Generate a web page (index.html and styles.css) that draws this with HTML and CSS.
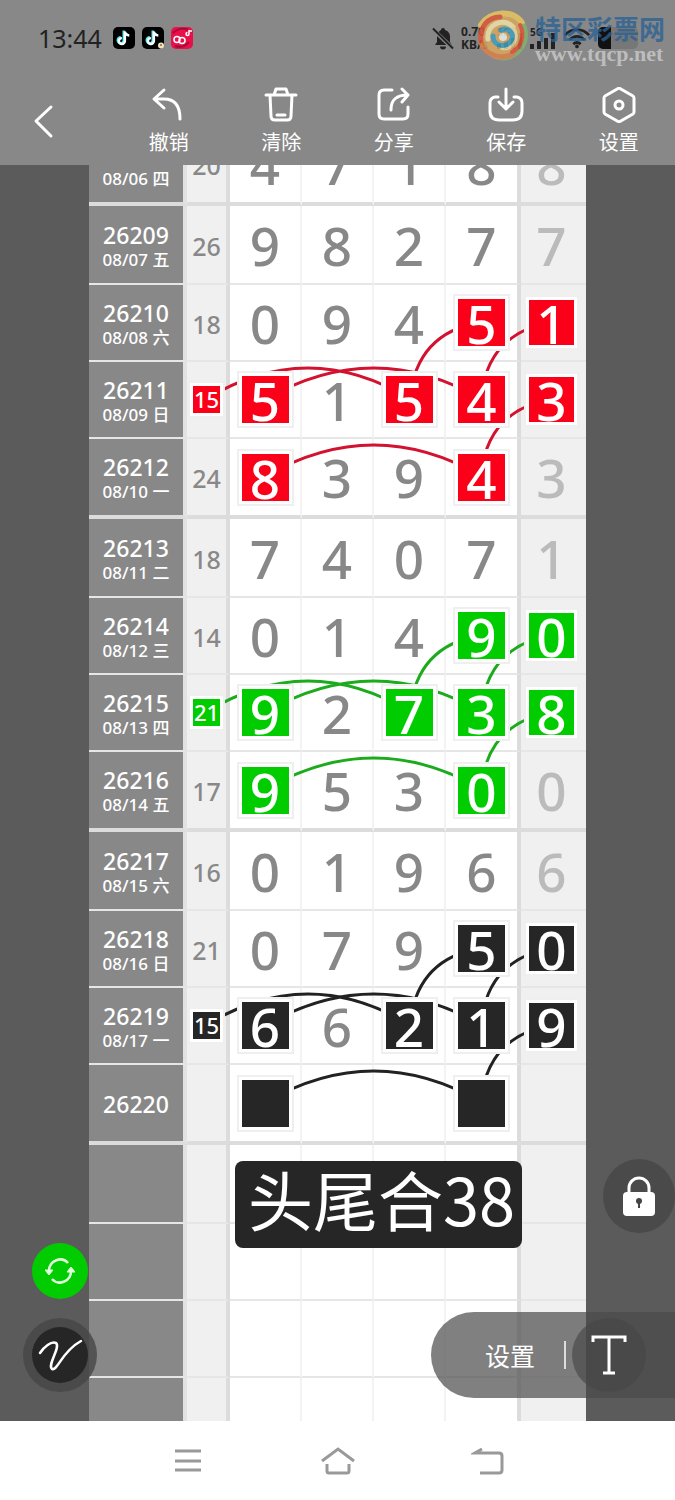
FILE: index.html
```html
<!DOCTYPE html>
<html lang="zh-CN">
<head>
    <meta charset="UTF-8">
    <meta name="viewport" content="width=device-width, initial-scale=1.0">
    <title>走势图</title>
    <link rel="stylesheet" href="styles.css">
</head>
<body>
    <header class="header">
        <!-- Status bar -->
        <div class="status">
            <span class="time">13:44</span>
            <svg class="app" viewBox="0 0 22 22"><rect width="22" height="22" rx="5" fill="#000"/><g fill="none" stroke-width="2.4"><path d="M11.3 4v9.600a3 3 0 1 1-3-3M11.300 4.500c.6 2.300 2 3.400 4.400 3.500" stroke="#5ee" transform="translate(-.6 -.4)"/><path d="M11.900 4.500v9.600a3 3 0 1 1-3-3M11.900 5c.6 2.300 2 3.400 4.400 3.500" stroke="#fff"/></g></svg>
            <svg class="app" viewBox="0 0 22 22"><rect width="22" height="22" rx="5" fill="#000"/><g fill="none" stroke-width="2.4"><path d="M11.3 4v9.600a3 3 0 1 1-3-3M11.300 4.500c.6 2.300 2 3.400 4.400 3.500" stroke="#5ee" transform="translate(-.6 -.4)"/><path d="M11.900 4.500v9.600a3 3 0 1 1-3-3M11.900 5c.6 2.300 2 3.400 4.400 3.500" stroke="#fff"/></g><circle cx="19" cy="18.500" r="3" fill="#f3e6b8"/><circle cx="19" cy="18" r="1" fill="#865"/></svg>
            <svg class="app" viewBox="0 0 22 22"><rect width="22" height="22" rx="5" fill="#e80f4a"/><path d="M2 6c5-5 11-5 15-3M4 19c6 2 10 1 14-4" stroke="#a00a38" stroke-width="2" fill="none"/><g fill="none" stroke="#fff" stroke-width="1.500"><circle cx="6" cy="12.500" r="3"/><circle cx="11" cy="13.500" r="3"/><path d="M18 3v4a1.500 1.500 0 1 1-1.500-1.500M18 4h3"/></g></svg>
            <span class="spacer"></span>
            <svg class="bell" viewBox="0 0 22 24"><path d="M11 2a2 2 0 0 1 2 2c3 1 5 3 5 7v5l2 3H3l2-3v-5c0-4 2-6 4-7a2 2 0 0 1 2-2zM8 20.500h6a3 3 0 0 1-6 0z" fill="#222"/><path d="M1 3.500l20 19" stroke="#888" stroke-width="4"/><path d="M1 2.500l20 20" stroke="#222" stroke-width="2"/></svg>
            <span class="speed">0.70<br>KB/s</span>
            <span class="signal"><small>5G</small><svg viewBox="0 0 26 16"><path d="M2 16v-5M9 16V8M16 16V5M23 16V0" stroke="#222" stroke-width="4"/></svg></span>
            <span class="signal"><small>5G</small><svg viewBox="0 0 26 16"><path d="M2 16v-5M9 16V8M16 16V5M23 16V0" stroke="#222" stroke-width="4"/></svg></span>
            <svg class="wifi" viewBox="0 0 30 24"><g fill="none" stroke="#222" stroke-width="3"><path d="M2 9c7-8 19-8 26 0M7 14c5-5 11-5 16 0M11 18.500c3-2.500 5-2.500 8 0"/></g><circle cx="15" cy="21" r="2" fill="#222"/></svg>
            <svg class="battery" viewBox="0 0 40 22"><rect width="40" height="22" rx="5" fill="#777"/><path d="M5 0h8v22H5a5 5 0 0 1-5-5V5a5 5 0 0 1 5-5z" fill="#111"/></svg>
        </div>

        <div class="watermark">
            <svg viewBox="0 0 54 54">
                <circle cx="27" cy="27" r="24" fill="#d9a860"/>
                <g fill="none" stroke-linecap="round">
                    <path d="M5 16C14 2 38 0 46 14" stroke="#e9c65e" stroke-width="6"/>
                    <path d="M48 17c6 18-8 32-22 32" stroke="#7fb56a" stroke-width="5"/>
                    <path d="M5 34c4 12 20 17 32 11" stroke="#dd8048" stroke-width="5"/>
                    <path d="M5 32C3 18 12 8 24 8" stroke="#e0563a" stroke-width="5"/>
                    <path d="M44 16c5 10 2 22-8 27" stroke="#e2523c" stroke-width="4"/>
                    <path d="M12 30c-2-15 16-22 25-12" stroke="#efe3a8" stroke-width="5"/>
                    <path d="M37 19c7 10-1 22-11 20" stroke="#e9d9a0" stroke-width="4"/>
                    <path d="M17 27c0 11 15 13 19 3 2-7-5-12-11-9" stroke="#3f9fc0" stroke-width="5"/>
                    <circle cx="27" cy="28" r="4" fill="#e8efe9" stroke="none"/>
                </g>
            </svg>
            <div>
                <div class="site-name">特区彩票网</div>
                <div class="site-url">www.tqcp.net</div>
            </div>
        </div>

        <!-- Toolbar -->
        <nav class="toolbar">
            <button class="tool back" aria-label="返回"><svg viewBox="0 0 36 36"><path d="M25 4L10 18l15 15"/></svg></button>
            <button class="tool"><svg viewBox="0 0 36 36"><path d="M13 3L3 12l10 9M4 12h9c10 0 16 6 16 20"/></svg>撤销</button>
            <button class="tool"><svg viewBox="0 0 36 36"><path d="M3 8h30M11 8l2-6h10l2 6M7 8l1 21q0 4 4 4h12q4 0 4-4l1-21M14 28h8"/></svg>清除</button>
            <button class="tool"><svg viewBox="0 0 36 36"><path d="M16 3H8q-5 0-5 5v19q0 5 5 5h19q5 0 5-5v-7M15 23c0-10 5-15 17-15M26 2l6 6-6 7"/></svg>分享</button>
            <button class="tool"><svg viewBox="0 0 36 36"><path d="M18 2v19M11 15l7 7 7-7M10 10H7q-5 1-5 6v8q0 9 9 9h14q9 0 9-9v-8q0-5-5-6h-3"/></svg>保存</button>
            <button class="tool"><svg viewBox="0 0 36 36"><path d="M18 1l14 8q1 1 1 2v14q0 1-1 2l-14 8-14-8q-1-1-1-2V11q0-1 1-2z"/><circle cx="18" cy="18" r="4"/></svg>设置</button>
        </nav>
    </header>

    <main class="main">
        <div class="board">
            <table class="chart">
                <colgroup>
                    <col class="c-issue"><col class="c-sum"><col class="c-num"><col class="c-num"><col class="c-num"><col class="c-num4"><col class="c-last">
                </colgroup>
                <tbody>
                    <tr><th>26208<span>08/06 四</span></th><td>20</td><td>4</td><td>7</td><td>1</td><td>8</td><td>8</td></tr>
                </tbody>
                <tbody class="red">
                    <tr><th>26209<span>08/07 五</span></th><td>26</td><td>9</td><td>8</td><td>2</td><td>7</td><td>7</td></tr>
                    <tr><th>26210<span>08/08 六</span></th><td>18</td><td>0</td><td>9</td><td>4</td><td><b>5</b></td><td><b>1</b></td></tr>
                    <tr><th>26211<span>08/09 日</span></th><td><b>15</b></td><td><b>5</b></td><td>1</td><td><b>5</b></td><td><b>4</b></td><td><b>3</b></td></tr>
                    <tr><th>26212<span>08/10 一</span></th><td>24</td><td><b>8</b></td><td>3</td><td>9</td><td><b>4</b></td><td>3</td></tr>
                </tbody>
                <tbody class="green">
                    <tr><th>26213<span>08/11 二</span></th><td>18</td><td>7</td><td>4</td><td>0</td><td>7</td><td>1</td></tr>
                    <tr><th>26214<span>08/12 三</span></th><td>14</td><td>0</td><td>1</td><td>4</td><td><b>9</b></td><td><b>0</b></td></tr>
                    <tr><th>26215<span>08/13 四</span></th><td><b>21</b></td><td><b>9</b></td><td>2</td><td><b>7</b></td><td><b>3</b></td><td><b>8</b></td></tr>
                    <tr><th>26216<span>08/14 五</span></th><td>17</td><td><b>9</b></td><td>5</td><td>3</td><td><b>0</b></td><td>0</td></tr>
                </tbody>
                <tbody class="black">
                    <tr><th>26217<span>08/15 六</span></th><td>16</td><td>0</td><td>1</td><td>9</td><td>6</td><td>6</td></tr>
                    <tr><th>26218<span>08/16 日</span></th><td>21</td><td>0</td><td>7</td><td>9</td><td><b>5</b></td><td><b>0</b></td></tr>
                    <tr><th>26219<span>08/17 一</span></th><td><b>15</b></td><td><b>6</b></td><td>6</td><td><b>2</b></td><td><b>1</b></td><td><b>9</b></td></tr>
                    <tr><th>26220</th><td></td><td><b></b></td><td></td><td></td><td><b></b></td><td></td></tr>
                </tbody>
                <tbody>
                    <tr><th></th><td></td><td></td><td></td><td></td><td></td><td></td></tr>
                    <tr><th></th><td></td><td></td><td></td><td></td><td></td><td></td></tr>
                    <tr><th></th><td></td><td></td><td></td><td></td><td></td><td></td></tr>
                    <tr><th></th><td></td><td></td><td></td><td></td><td></td><td></td></tr>
                </tbody>
            </table>

            <!-- Lines that join the marked numbers, one set per group -->
            <svg class="lines" viewBox="0 0 497 1332" preserveAspectRatio="none">
                <defs>
                    <path id="links" d="M117 273Q219 211 321 273M177 273Q285 211 392 273M177 350Q285 288 392 350M321 273Q327 207 392 196M392 273Q398 207 463 196M392 350Q398 284 463 273"/>
                </defs>
                <use href="#links" stroke="#d2122e"/>
                <use href="#links" y="313" stroke="#1cab1c"/>
                <use href="#links" y="626" stroke="#222"/>
            </svg>
            <div class="note">头尾合38</div>
        </div>

        <button class="round lock" aria-label="锁定"><svg viewBox="0 0 34 40"><path d="M7 18v-6a10 10 0 0 1 20 0v6" fill="none" stroke="#fff" stroke-width="3"/><rect x="1" y="16" width="32" height="24" rx="4" fill="#fff"/><circle cx="17" cy="25" r="3" fill="#444"/><path d="M17 25v7" stroke="#444" stroke-width="2"/></svg></button>
        <button class="round refresh" aria-label="刷新"><svg viewBox="0 0 30 26"><g fill="none" stroke="#dfffdc" stroke-width="2.500"><path d="M4 13C4 2 17-2 23 5M26 13c0 11-13 15-19 8"/></g><path d="M0 12h8l-4 5zM22 14h8l-4-5z" fill="#dfffdc" stroke="#dfffdc"/></svg></button>
        <button class="round pen" aria-label="画笔"><svg viewBox="0 0 56 56"><path d="M8 26C12 20 19 14 24 16c5 4-9 22-4 26 6 2 9-17 29-28" fill="none" stroke="#fff" stroke-width="2.500" stroke-linecap="round"/></svg></button>
        <div class="text-bar">
            <button class="text-set">设置</button>
            <button class="round text-tool" aria-label="文字"><svg viewBox="0 0 36 40"><path d="M2 7V2h32v5M18 2v36M12 38h12" fill="none" stroke="#fff" stroke-width="3"/></svg></button>
        </div>
    </main>

    <footer class="nav-bar">
        <button aria-label="菜单"><svg viewBox="0 0 34 28"><path d="M4 4h26M4 14h26M4 23h26"/></svg></button>
        <button aria-label="主页"><svg viewBox="0 0 34 28"><path d="M1 14L17 2l16 12M6 17v7q0 2 2 2h18q2 0 2-2v-7"/></svg></button>
        <button aria-label="返回"><svg viewBox="0 0 34 28"><path d="M11 2L4 6h24q3 0 3 3v14q0 3-3 3H9"/></svg></button>
    </footer>
</body>
</html>
```
FILE: styles.css
```css
* {
    box-sizing: border-box;
}
body {
    margin: 0;
    height: 100vh;
    display: flex;
    flex-direction: column;
    font-family: "Noto Sans", "Noto Sans CJK SC", sans-serif;
    background: #fff;
}
button {
    border: none;
    padding: 0;
    background: none;
    color: #fff;
    font-family: inherit;
    cursor: pointer;
}
svg {
    display: block;
}

/* Header */
.header {
    position: relative;
    height: 165px;
    background: #888;
}
.status {
    display: flex;
    align-items: center;
    gap: 7px;
    height: 75px;
    padding: 0 37px 0 38px;
    color: #222;
}
.time {
    font-size: 25px;
    margin-right: 4px;
}
.app {
    width: 22px;
    height: 22px;
}
.spacer {
    flex: 1;
}
.bell {
    width: 22px;
    height: 24px;
}
.speed {
    font-size: 12px;
    line-height: 13px;
    font-weight: bold;
    margin-right: 2px;
}
.signal small {
    display: block;
    font-size: 10px;
    line-height: 10px;
    font-weight: bold;
}
.signal svg {
    width: 26px;
    height: 16px;
    margin-top: -4px;
}
.wifi {
    width: 28px;
    height: 24px;
}
.battery {
    width: 40px;
    height: 22px;
}
.watermark {
    position: absolute;
    top: 9px;
    right: 10px;
    display: flex;
    align-items: center;
    gap: 5px;
}
.watermark svg {
    width: 54px;
    height: 54px;
    opacity: 0.85;
}
.site-name {
    padding-top: 4px;
    font-size: 26px;
    line-height: 32px;
    font-weight: bold;
    color: rgba(42, 98, 148, 0.8);
}
.site-url {
    font-family: "Liberation Serif", serif;
    font-size: 22px;
    line-height: 18px;
    font-weight: bold;
    color: rgba(205, 205, 205, 0.8);
}
.toolbar {
    display: grid;
    grid-template-columns: repeat(6, 1fr);
    height: 90px;
}
.tool {
    display: flex;
    flex-direction: column;
    align-items: center;
    gap: 6px;
    padding-top: 12px;
    font-size: 20px;
    line-height: 28px;
}
.tool svg {
    width: 36px;
    height: 36px;
    fill: none;
    stroke: #fff;
    stroke-width: 3;
    stroke-linejoin: round;
    stroke-linecap: round;
}
.back {
    padding: 28px 24px 0 0;
}

/* Chart */
.main {
    position: relative;
    flex: 1;
    min-height: 0;
    overflow: hidden;
    background: #5b5b5b;
}
.board {
    position: relative;
    margin: -39px 89px 0;
}
.chart {
    width: 100%;
    table-layout: fixed;
    border-spacing: 0;
    background: #fff;
}
.c-issue { width: 98px; }
.c-sum { width: 43px; }
.c-num { width: 72px; }
.c-num4 { width: 75px; }
.c-last { width: 65px; }
.chart th,
.chart td {
    height: 77px;
    padding: 2px 0 0;
    text-align: center;
    vertical-align: middle;
    border-bottom: 2px solid #e6e6e6;
}
.chart th {
    background: #888;
    background-clip: padding-box;
    border-right: 4px solid #e2e2e2;
    color: #fff;
    font-size: 23px;
    line-height: 28px;
    font-weight: 500;
}
.chart th span {
    display: block;
    font-size: 17px;
    line-height: 22px;
}
.chart td {
    color: #888;
    font-size: 53px;
    line-height: 60px;
    font-weight: 500;
    border-right: 2px solid #f3f3f3;
}
.chart td:nth-child(2) {
    background: #f0f0f0;
    border-right: 4px solid #dcdcdc;
    font-size: 25px;
}
.chart td:nth-child(6) {
    border-right: 4px solid #dcdcdc;
}
.chart td:last-child {
    padding-right: 4px;
    background: #f0f0f0;
    border-right: none;
    color: #bbb;
}
.chart tr:first-child > * {
    height: 79px;
}
.chart tr:last-child > * {
    height: 80px;
    border-bottom: 4px solid #dcdcdc;
}

/* Marked numbers */
.chart b {
    display: block;
    position: relative;
    z-index: 2;
    width: 47px;
    height: 47px;
    margin: -2px auto 0;
    line-height: 49px;
    font-weight: 500;
    color: #fff;
    box-shadow: 0 0 0 3px #fff, 0 0 0 5px #efefef;
}
.chart td:nth-child(2) b {
    width: 27px;
    height: 27px;
    font-size: 22px;
    line-height: 27px;
}
.chart td:last-child b {
    width: 45px;
    height: 45px;
    line-height: 47px;
}
.red b { background: #fb0019; }
.green b { background: #0c0; }
.black b { background: #262626; }
.lines {
    position: absolute;
    top: 0;
    left: 0;
    z-index: 1;
    width: 100%;
    height: 100%;
    fill: none;
    stroke-width: 3;
}
.note {
    position: absolute;
    top: 1035px;
    left: 146px;
    z-index: 3;
    padding: 0 7px 13px 13px;
    border-radius: 8px;
    background: #262626;
    color: #fff;
    font-family: "Noto Sans CJK SC", sans-serif;
    font-size: 65px;
    line-height: 74px;
    white-space: nowrap;
}

/* Floating controls */
.round {
    display: flex;
    align-items: center;
    justify-content: center;
    width: 74px;
    height: 74px;
    border-radius: 50%;
    background: rgba(70, 70, 70, 0.8);
}
.lock,
.refresh,
.pen,
.text-bar {
    position: absolute;
    z-index: 4;
}
.lock {
    right: 0;
    bottom: 188px;
    width: 72px;
}
.lock svg {
    width: 34px;
    height: 40px;
}
.refresh {
    left: 32px;
    bottom: 122px;
    width: 56px;
    height: 56px;
    background: #0c0;
}
.refresh svg {
    width: 30px;
    height: 26px;
}
.pen {
    left: 23px;
    bottom: 29px;
}
.pen svg {
    width: 56px;
    height: 56px;
    border-radius: 50%;
    background: #262626;
}
.text-bar {
    right: 0;
    bottom: 23px;
    display: flex;
    align-items: center;
    height: 86px;
    padding: 0 29px 0 54px;
    border-radius: 43px 0 0 43px;
    background: rgba(74, 74, 74, 0.7);
}
.text-set {
    padding: 2px 29px 0 0;
    margin-right: 6px;
    border-right: 2px solid #ddd;
    font-size: 25px;
    line-height: 26px;
}
.text-tool {
    background: rgba(70, 70, 70, 0.65);
}
.text-tool svg {
    width: 36px;
    height: 40px;
}

/* System navigation */
.nav-bar {
    display: flex;
    align-items: center;
    justify-content: center;
    gap: 116px;
    height: 79px;
    background: #fff;
}
.nav-bar svg {
    width: 34px;
    height: 28px;
    fill: none;
    stroke: #999;
    stroke-width: 3;
}
```
